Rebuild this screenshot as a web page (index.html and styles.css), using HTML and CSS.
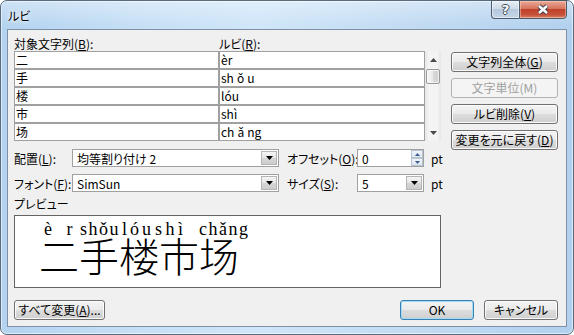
FILE: index.html
```html
<!DOCTYPE html>
<html lang="ja">
<head>
    <meta charset="UTF-8">
    <title>ルビ</title>
    <link rel="stylesheet" href="styles.css">
</head>
<body>
    <div class="window">
        <div class="titlebar">
            <span class="caption">ルビ</span>
            <div class="caption-buttons">
                <span class="cap-btn help">?</span>
                <span class="cap-btn close">
                    <svg width="14" height="11" viewBox="0 0 14 11">
                        <path d="M3 2 L11 9 M11 2 L3 9" stroke="#3b4653" stroke-width="4.4" fill="none"/>
                        <path d="M3 2 L11 9 M11 2 L3 9" stroke="#fff" stroke-width="2.4" fill="none"/>
                    </svg>
                </span>
            </div>
        </div>

        <div class="client">
            <div class="top">
                <div class="pairs">
                    <div class="pair-head">
                        <span class="head-base">対象文字列(<u>B</u>):</span>
                        <span>ルビ(<u>R</u>):</span>
                    </div>
                    <div class="pair-grid">
                        <div class="col">
                            <div class="cell">二</div>
                            <div class="cell">手</div>
                            <div class="cell">楼</div>
                            <div class="cell">市</div>
                            <div class="cell">场</div>
                        </div>
                        <div class="col">
                            <div class="cell">èr</div>
                            <div class="cell">sh<span class="wide">ǒ</span>u</div>
                            <div class="cell">lóu</div>
                            <div class="cell">shì</div>
                            <div class="cell">ch<span class="wide">ǎ</span>ng</div>
                        </div>
                        <div class="vscroll">
                            <span class="sb-arrow">
                                <svg width="7" height="4" viewBox="0 0 7 4"><polygon points="0,4 7,4 3.5,0" fill="#4a4a4a"/></svg>
                            </span>
                            <span class="sb-thumb"></span>
                            <span class="sb-arrow down">
                                <svg width="7" height="4" viewBox="0 0 7 4"><polygon points="0,0 7,0 3.5,4" fill="#4a4a4a"/></svg>
                            </span>
                        </div>
                    </div>
                </div>

                <div class="side-buttons">
                    <span class="btn">文字列全体(<u>G</u>)</span>
                    <span class="btn disabled">文字単位(M)</span>
                    <span class="btn">ルビ削除(<u>V</u>)</span>
                    <span class="btn">変更を元に戻す(<u>D</u>)</span>
                </div>
            </div>

            <div class="opt-row">
                <span class="opt-label">配置(<u>L</u>):</span>
                <div class="combo">
                    <span>均等割り付け 2</span>
                    <span class="drop">
                        <svg width="7" height="4" viewBox="0 0 7 4"><polygon points="0,0 7,0 3.5,4" fill="#000"/></svg>
                    </span>
                </div>
                <span class="opt-label2">オフセット(<u>O</u>):</span>
                <div class="combo small">
                    <span>0</span>
                    <span class="spin">
                        <span class="spin-half">
                            <svg width="5" height="3" viewBox="0 0 5 3"><polygon points="0,3 5,3 2.5,0" fill="#3a5f95"/></svg>
                        </span>
                        <span class="spin-half">
                            <svg width="5" height="3" viewBox="0 0 5 3"><polygon points="0,0 5,0 2.5,3" fill="#3a5f95"/></svg>
                        </span>
                    </span>
                </div>
                <span class="unit">pt</span>
            </div>

            <div class="opt-row second">
                <span class="opt-label">フォント(<u>F</u>):</span>
                <div class="combo">
                    <span>SimSun</span>
                    <span class="drop">
                        <svg width="7" height="4" viewBox="0 0 7 4"><polygon points="0,0 7,0 3.5,4" fill="#000"/></svg>
                    </span>
                </div>
                <span class="opt-label2">サイズ(<u>S</u>):</span>
                <div class="combo small">
                    <span>5</span>
                    <span class="drop">
                        <svg width="7" height="4" viewBox="0 0 7 4"><polygon points="0,0 7,0 3.5,4" fill="#000"/></svg>
                    </span>
                </div>
                <span class="unit">pt</span>
            </div>

            <div class="preview-label">プレビュー</div>
            <div class="preview">
                <div class="ruby-line">
                    <span class="rt rt-er">è r</span>
                    <span class="rt rt-shou">shǒu</span>
                    <span class="rt rt-lou">lóu</span>
                    <span class="rt rt-shi">shì</span>
                    <span class="rt rt-chang">chǎng</span>
                </div>
                <div class="base-line">二手楼市场</div>
            </div>

            <div class="footer">
                <span class="btn btn-all">すべて変更(<u>A</u>)...</span>
                <span class="btn btn-ok default">OK</span>
                <span class="btn btn-cancel">キャンセル</span>
            </div>
        </div>
    </div>
</body>
</html>
```

FILE: styles.css
```css
* {
    margin: 0;
    padding: 0;
    box-sizing: border-box;
}

body {
    width: 574px;
    height: 335px;
    overflow: hidden;
    background: #fff;
    font-family: "Noto Sans CJK JP", sans-serif;
    font-size: 12px;
    font-feature-settings: "palt";
    color: #000;
}

u {
    text-decoration: underline;
    text-underline-offset: 1px;
}

.window {
    width: 574px;
    height: 335px;
    border: 1px solid #5a6b7e;
    border-radius: 7px;
    background:
        linear-gradient(180deg, rgba(255, 255, 255, 0.35) 0, rgba(255, 255, 255, 0) 24px),
        linear-gradient(90deg, #b4d3f0 0%, #c7e0f6 25%, #d0e6f9 45%, #c3dcf3 70%, #b2d1ee 100%);
    box-shadow: inset 0 0 0 1px rgba(255, 255, 255, 0.55);
    display: flex;
    flex-direction: column;
}

/* title bar */
.titlebar {
    height: 28px;
    display: flex;
    align-items: flex-start;
}

.caption {
    padding: 6px 0 0 7px;
    line-height: 17px;
    text-shadow: 0 0 6px #fff, 0 0 3px #fff;
}

.caption-buttons {
    margin-left: auto;
    margin-right: 6px;
    margin-top: -1px;
    display: flex;
}

.cap-btn {
    height: 19px;
    border: 1px solid #4c5b6b;
    display: flex;
    align-items: center;
    justify-content: center;
}

.help {
    width: 28px;
    border-right: none;
    border-radius: 0 0 0 4px;
    background: linear-gradient(#e6edf4, #cfdbe7 45%, #b6c9dc 50%, #c4d6e8 100%);
    box-shadow: inset 0 0 0 1px rgba(255, 255, 255, 0.5);
    color: #fff;
    font: bold 13px "DejaVu Sans", sans-serif;
    text-shadow: 1px 0 #3e4c5b, -1px 0 #3e4c5b, 0 1px #3e4c5b, 0 -1px #3e4c5b;
}

.close {
    width: 48px;
    border-radius: 0 0 4px 0;
    background: linear-gradient(#eaa997, #d6755f 45%, #c2412a 50%, #c6503a 80%, #dc8366 100%);
    box-shadow: inset 0 0 0 1px rgba(255, 220, 200, 0.45);
}

/* client area */
.client {
    margin: 0 6px;
    height: 298px;
    border: 1px solid #7d90a5;
    background: #f0f0f0;
    padding: 6px 8px 0 6px;
}

.top {
    display: flex;
    align-items: flex-start;
    height: 105px;
}

.pairs {
    width: 427px;
}

.pair-head {
    display: flex;
    height: 15px;
    line-height: 15px;
}

.head-base {
    width: 205px;
}

.pair-grid {
    display: grid;
    grid-template-columns: 205px 206px 16px;
}

.col {
    display: flex;
    flex-direction: column;
}

.cell {
    height: 18px;
    border: 1px solid #a0a0a0;
    background: #fff;
    padding-left: 1px;
    line-height: 16px;
    white-space: nowrap;
    overflow: hidden;
}

.wide {
    margin: 0 3px;
}

.vscroll {
    height: 90px;
    background: linear-gradient(90deg, #e6e6e6, #f4f4f4 25%, #f4f4f4 75%, #e6e6e6);
    display: flex;
    flex-direction: column;
    align-items: center;
}

.sb-arrow {
    height: 17px;
    display: flex;
    align-items: center;
    justify-content: center;
}

.sb-arrow.down {
    margin-top: auto;
}

.sb-thumb {
    width: 14px;
    height: 15px;
    margin-top: 1px;
    border: 1px solid #979797;
    border-radius: 2px;
    background: linear-gradient(90deg, #f6f6f6, #e9e9e9 50%, #d9d9d9 51%, #cfcfcf);
    box-shadow: inset 0 0 0 1px rgba(255, 255, 255, 0.7);
}

.side-buttons {
    margin-left: 10px;
    width: 107px;
    padding-top: 16px;
    display: flex;
    flex-direction: column;
    gap: 6px;
}

/* buttons */
.btn {
    height: 20px;
    flex-shrink: 0;
    border: 1px solid #707070;
    border-radius: 3px;
    background: linear-gradient(#f3f3f3 0%, #ebebeb 48%, #dddddd 50%, #cfcfcf 100%);
    box-shadow: inset 0 0 0 1px rgba(255, 255, 255, 0.85);
    display: flex;
    align-items: center;
    justify-content: center;
    line-height: 1;
    white-space: nowrap;
}

.btn.disabled {
    border-color: #adb2b5;
    background: #f4f4f4;
    color: #a0a0a0;
    box-shadow: none;
}

.btn.default {
    border-color: #3c7fb1;
    box-shadow: inset 0 0 0 1px #9fdcf5;
}

/* option rows */
.opt-row {
    display: flex;
    align-items: center;
    height: 18px;
    margin-top: 8px;
    white-space: nowrap;
}

.opt-row.second {
    margin-top: 7px;
}

.opt-label {
    width: 58px;
    flex-shrink: 0;
}

.opt-label2 {
    margin-left: 8px;
    width: 70px;
    flex-shrink: 0;
}

.combo {
    width: 207px;
    height: 18px;
    flex-shrink: 0;
    border: 1px solid #a0a0a0;
    background: #fff;
    display: flex;
    align-items: center;
    padding-left: 4px;
}

.combo.small {
    width: 67px;
}

.drop {
    margin-left: auto;
    margin-right: 1px;
    width: 16px;
    height: 14px;
    border: 1px solid #b5b5b5;
    background: linear-gradient(#f5f5f5, #e4e4e4 50%, #d6d6d6 51%, #cdcdcd);
    display: flex;
    align-items: center;
    justify-content: center;
}

.spin {
    margin-left: auto;
    width: 12px;
    height: 16px;
    display: flex;
    flex-direction: column;
}

.spin-half {
    height: 8px;
    border: 1px solid #b8c4d2;
    background: linear-gradient(#f3f6fa, #dde5ee);
    display: flex;
    align-items: center;
    justify-content: center;
}

.unit {
    margin-left: 7px;
}

/* preview */
.preview-label {
    margin-top: 4px;
    height: 16px;
    line-height: 16px;
    margin-bottom: 3px;
}

.preview {
    width: 427px;
    height: 73px;
    border: 1px solid #646464;
    background: #fff;
    padding: 7px 0 0 24px;
}

.ruby-line {
    display: flex;
    height: 12px;
    margin-left: 5px;
    line-height: 12px;
    font-family: "Liberation Serif", serif;
    font-size: 18px;
    font-feature-settings: normal;
}

.rt {
    white-space: nowrap;
}

.rt-er {
    width: 36px;
    word-spacing: 10px;
}

.rt-shou {
    width: 42px;
    letter-spacing: 1.5px;
}

.rt-lou {
    width: 33px;
    letter-spacing: 3px;
}

.rt-shi {
    width: 44px;
    letter-spacing: 3.5px;
}

.rt-chang {
    width: 52px;
    letter-spacing: 1.5px;
}

.base-line {
    font-family: "Noto Sans CJK SC", sans-serif;
    font-feature-settings: normal;
    font-weight: 300;
    font-size: 40px;
    line-height: 40px;
}

/* footer */
.footer {
    display: flex;
    margin-top: 12px;
}

.btn-all {
    width: 91px;
}

.btn-ok {
    margin-left: auto;
    width: 74px;
}

.btn-cancel {
    margin-left: 10px;
    width: 74px;
}
```
